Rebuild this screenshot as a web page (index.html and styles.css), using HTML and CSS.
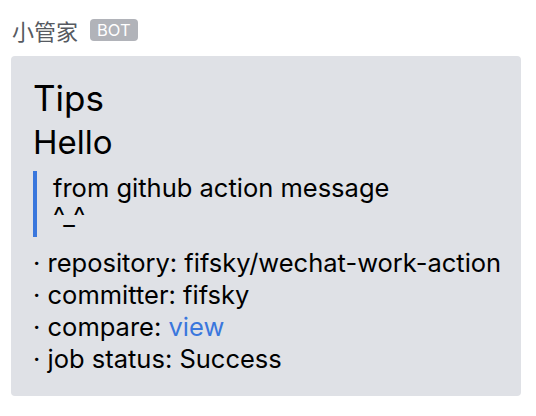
FILE: index.html
```html
<!DOCTYPE html>
<html>
<head>
<meta charset="utf-8">
<link rel="stylesheet" href="styles.css">
</head>
<body>
<div class="header">
  <span class="name">小管家</span>
  <span class="badge">BOT</span>
</div>
<div class="card">
  <div class="h1">Tips</div>
  <div class="h2">Hello</div>
  <blockquote class="quote">
    <div>from github action message</div>
    <div>^_^</div>
  </blockquote>
  <ul class="list">
    <li>· repository: fifsky/wechat-work-action</li>
    <li>· committer: fifsky</li>
    <li>· compare: <a class="link" href="#">view</a></li>
    <li>· job status: Success</li>
  </ul>
</div>
</body>
</html>
```

FILE: styles.css
```css
html, body {
  margin: 0;
  padding: 0;
  background: #ffffff;
}
body {
  font-family: "Inter", "Noto Sans CJK SC", sans-serif;
  width: 536px;
  height: 416px;
  overflow: hidden;
}
.header {
  display: flex;
  align-items: center;
  gap: 12px;
  padding: 19px 0 0 12px;
  height: 22px;
}
.name {
  font-family: "Noto Sans CJK SC", sans-serif;
  font-size: 22px;
  line-height: 22px;
  color: #565a61;
}
.badge {
  background: #b1b3b9;
  color: #ffffff;
  font-size: 16.5px;
  line-height: 22px;
  height: 22px;
  padding: 0 7px;
  border-radius: 4px;
}
.card {
  margin: 15px 0 0 11px;
  width: 510px;
  height: 340px;
  box-sizing: border-box;
  padding: 20px 0 0 22px;
  background: #dfe1e6;
  border-radius: 4px;
  color: #000000;
  white-space: nowrap;
}
.h1 {
  font-size: 35px;
  line-height: 44px;
}
.h2 {
  font-size: 33px;
  line-height: 44px;
}
.quote {
  margin: 7px 0 0 0;
  border-left: 4px solid #3a77dd;
  padding: 3px 0 7px 16px;
  font-size: 25.5px;
  line-height: 28px;
}
.list {
  list-style: none;
  margin: 10px 0 0 0;
  padding: 0;
  font-size: 25.5px;
  line-height: 32px;
}
.link {
  color: #3a77dd;
  text-decoration: none;
}
```
